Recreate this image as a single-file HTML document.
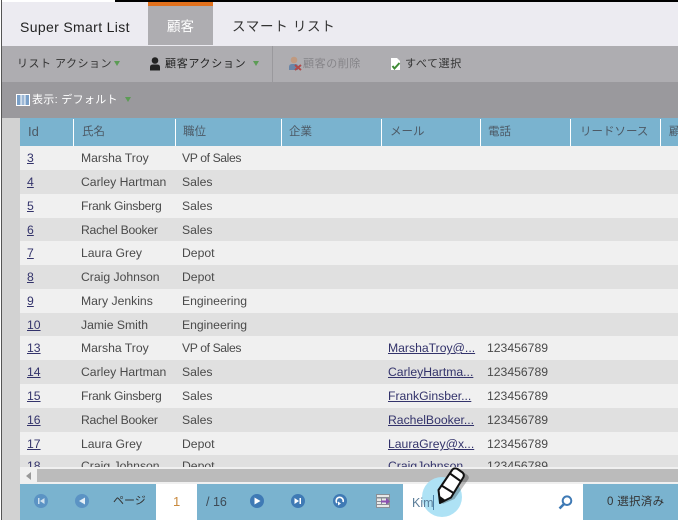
<!DOCTYPE html>
<html><head><meta charset="utf-8">
<style>
html,body{margin:0;padding:0;background:#fff}
#p{position:relative;width:678px;height:520px;overflow:hidden;font-family:"Liberation Sans","Noto Sans CJK JP",sans-serif;font-size:12px;color:#444;background:#fff}
#p div,#p span.a,#p svg.a{position:absolute}
.t{white-space:nowrap;line-height:16px;height:16px}
.c{white-space:nowrap;line-height:16px;height:16px;font-size:12.2px;color:#4a4a4a}
.n{letter-spacing:-.25px}
.v{letter-spacing:-.4px}
.l{color:#33336b;text-decoration:underline}
.h{top:124px;white-space:nowrap;line-height:16px;font-size:11.5px;color:#4d5a66}
.s{width:1px;top:119px;height:27px;background:#fff}
</style></head><body>
<div id="p">
<div style="left:0;top:0;width:678px;height:520px;background:#fff"></div>
<div style="left:2px;top:2px;width:676px;height:44px;background:#ecebf1"></div>
<div style="left:115px;top:0;width:563px;height:2px;background:#000"></div>
<div style="left:1px;top:0;width:1px;height:520px;background:#555"></div>
<div style="left:148px;top:2px;width:65px;height:43px;background:#aeadb1"></div>
<div style="left:148px;top:2px;width:65px;height:4px;background:#e2711d"></div>
<div class="t" style="left:20px;top:19px;font-size:14px;letter-spacing:.35px;color:#222">Super Smart List</div>
<div class="t" style="left:167px;top:19px;font-size:13.5px;color:#fff">顧客</div>
<div class="t" style="left:232px;top:19px;font-size:13.5px;letter-spacing:.7px;color:#333">スマート リスト</div>

<div style="left:2px;top:46px;width:676px;height:36px;background:#aeadb1"></div>
<div style="left:272px;top:46px;width:1px;height:36px;background:#9a999d"></div>
<div class="t" style="left:17px;top:56px;font-size:11px;letter-spacing:.5px;color:#333">リスト アクション</div>
<svg class="a" style="left:114px;top:61px" width="6" height="5"><path d="M0 0H6L3 5Z" fill="#5c9c55"/></svg>
<svg class="a" style="left:149px;top:57px" width="12" height="14"><circle cx="6" cy="3.500" r="3.300" fill="#222"/><path d="M1 13.500V10Q1 7.500 4 7.500H8Q11 7.500 11 10V13.500Z" fill="#222"/></svg>
<div class="t" style="left:165px;top:56px;font-size:11px;letter-spacing:.7px;color:#222">顧客アクション</div>
<svg class="a" style="left:253px;top:61px" width="6" height="5"><path d="M0 0H6L3 5Z" fill="#5c9c55"/></svg>
<svg class="a" style="left:288px;top:56px" width="14" height="15"><circle cx="6" cy="4" r="3.300" fill="#c09a80"/><path d="M1 14V11Q1 8 4 8H8Q10 8 10 11V14Z" fill="#6a86a8"/><path d="M7 9L13 14M13 9L7 14" stroke="#b04a4a" stroke-width="2"/></svg>
<div class="t" style="left:303px;top:56px;font-size:11px;letter-spacing:.6px;color:#858488">顧客の削除</div>
<svg class="a" style="left:390px;top:57px" width="11" height="14"><path d="M1 1H7L10 4V13H1Z" fill="#fff"/><path d="M2.500 9L4.500 11.500L9.500 6" fill="none" stroke="#3f8a35" stroke-width="2"/></svg>
<div class="t" style="left:405px;top:56px;font-size:11px;letter-spacing:.6px;color:#333">すべて選択</div>

<div style="left:2px;top:82px;width:676px;height:36px;background:#9a999d"></div>
<svg class="a" style="left:16px;top:94px" width="14" height="12"><rect width="14" height="12" fill="#fff"/><rect x="1" y="1" width="3.500" height="10" fill="#7aa0c8"/><rect x="5.500" y="1" width="3" height="10" fill="#9db8d6"/><rect x="9.500" y="1" width="3.500" height="10" fill="#7aa0c8"/></svg>
<div class="t" style="left:32px;top:92px;font-size:11px;letter-spacing:.3px;color:#fff">表示: デフォルト</div>
<svg class="a" style="left:125px;top:97px" width="6" height="5"><path d="M0 0H6L3 5Z" fill="#5c9c55"/></svg>

<div style="left:2px;top:118px;width:18px;height:350px;background:#d2d2d2"></div>
<div style="left:2px;top:468px;width:18px;height:52px;background:#d2d2d2"></div>
<div style="left:20px;top:118px;width:658px;height:28px;background:#7ab3cf"></div>
<div class="s" style="left:73px"></div><div class="s" style="left:175px"></div><div class="s" style="left:281px"></div><div class="s" style="left:381px"></div><div class="s" style="left:480px"></div><div class="s" style="left:570px"></div><div class="s" style="left:660px"></div>
<div class="h" style="left:28px;font-size:13px">Id</div>
<div class="h" style="left:82px">氏名</div>
<div class="h" style="left:183px">職位</div>
<div class="h" style="left:289px">企業</div>
<div class="h" style="left:390px">メール</div>
<div class="h" style="left:488px">電話</div>
<div class="h" style="left:580px">リードソース</div>
<div class="h" style="left:669px">顧客</div>

<div style="left:20px;top:146px;width:658px;height:24px;background:#f0f0f0"></div>
<div style="left:20px;top:170px;width:658px;height:24px;background:#e0e0e0"></div>
<div style="left:20px;top:194px;width:658px;height:24px;background:#f0f0f0"></div>
<div style="left:20px;top:218px;width:658px;height:23px;background:#e0e0e0"></div>
<div style="left:20px;top:241px;width:658px;height:24px;background:#f0f0f0"></div>
<div style="left:20px;top:265px;width:658px;height:24px;background:#e0e0e0"></div>
<div style="left:20px;top:289px;width:658px;height:24px;background:#f0f0f0"></div>
<div style="left:20px;top:313px;width:658px;height:23px;background:#e0e0e0"></div>
<div style="left:20px;top:336px;width:658px;height:24px;background:#f0f0f0"></div>
<div style="left:20px;top:360px;width:658px;height:24px;background:#e0e0e0"></div>
<div style="left:20px;top:384px;width:658px;height:24px;background:#f0f0f0"></div>
<div style="left:20px;top:408px;width:658px;height:24px;background:#e0e0e0"></div>
<div style="left:20px;top:432px;width:658px;height:23px;background:#f0f0f0"></div>
<div style="left:20px;top:455px;width:658px;height:13px;background:#e0e0e0"></div>

<div class="c l" style="left:27px;top:150px">3</div><div class="c" style="left:81px;top:150px">Marsha Troy</div><div class="c v" style="left:182px;top:150px">VP of Sales</div>
<div class="c l" style="left:27px;top:174px">4</div><div class="c" style="left:81px;top:174px">Carley Hartman</div><div class="c" style="left:182px;top:174px">Sales</div>
<div class="c l" style="left:27px;top:198px">5</div><div class="c n" style="left:81px;top:198px">Frank Ginsberg</div><div class="c" style="left:182px;top:198px">Sales</div>
<div class="c l" style="left:27px;top:222px">6</div><div class="c n" style="left:81px;top:222px">Rachel Booker</div><div class="c" style="left:182px;top:222px">Sales</div>
<div class="c l" style="left:27px;top:245px">7</div><div class="c" style="left:81px;top:245px">Laura Grey</div><div class="c" style="left:182px;top:245px">Depot</div>
<div class="c l" style="left:27px;top:269px">8</div><div class="c" style="left:81px;top:269px">Craig Johnson</div><div class="c" style="left:182px;top:269px">Depot</div>
<div class="c l" style="left:27px;top:293px">9</div><div class="c" style="left:81px;top:293px">Mary Jenkins</div><div class="c" style="left:182px;top:293px">Engineering</div>
<div class="c l" style="left:27px;top:317px">10</div><div class="c" style="left:81px;top:317px">Jamie Smith</div><div class="c" style="left:182px;top:317px">Engineering</div>
<div class="c l" style="left:27px;top:340px">13</div><div class="c" style="left:81px;top:340px">Marsha Troy</div><div class="c v" style="left:182px;top:340px">VP of Sales</div><div class="c l" style="left:388px;top:340px">MarshaTroy@...</div><div class="c" style="left:487px;top:340px">123456789</div>
<div class="c l" style="left:27px;top:364px">14</div><div class="c" style="left:81px;top:364px">Carley Hartman</div><div class="c" style="left:182px;top:364px">Sales</div><div class="c l" style="left:388px;top:364px">CarleyHartma...</div><div class="c" style="left:487px;top:364px">123456789</div>
<div class="c l" style="left:27px;top:388px">15</div><div class="c n" style="left:81px;top:388px">Frank Ginsberg</div><div class="c" style="left:182px;top:388px">Sales</div><div class="c l" style="left:388px;top:388px">FrankGinsber...</div><div class="c" style="left:487px;top:388px">123456789</div>
<div class="c l" style="left:27px;top:412px">16</div><div class="c n" style="left:81px;top:412px">Rachel Booker</div><div class="c" style="left:182px;top:412px">Sales</div><div class="c l" style="left:388px;top:412px">RachelBooker...</div><div class="c" style="left:487px;top:412px">123456789</div>
<div class="c l" style="left:27px;top:436px">17</div><div class="c" style="left:81px;top:436px">Laura Grey</div><div class="c" style="left:182px;top:436px">Depot</div><div class="c l" style="left:388px;top:436px">LauraGrey@x...</div><div class="c" style="left:487px;top:436px">123456789</div>
<div class="c l" style="left:27px;top:458px">18</div><div class="c" style="left:81px;top:458px">Craig Johnson</div><div class="c" style="left:182px;top:458px">Depot</div><div class="c l" style="left:388px;top:458px">CraigJohnson...</div><div class="c" style="left:487px;top:458px">123456789</div>

<div style="left:20px;top:467px;width:658px;height:17px;background:#f0f0f0"></div>
<div style="left:37px;top:469px;width:641px;height:13px;background:#bbb"></div>
<svg class="a" style="left:25px;top:472px" width="7" height="8"><path d="M6 0V8L1 4Z" fill="#999"/></svg>

<div style="left:20px;top:484px;width:658px;height:36px;background:#7ab3cf"></div>
<div style="left:156px;top:484px;width:41px;height:36px;background:#fff"></div>
<div style="left:403px;top:484px;width:180px;height:36px;background:#fff"></div>

<svg class="a" style="left:34px;top:494px" width="14" height="14"><circle cx="7" cy="7" r="7" fill="#5b93c4"/><path d="M4 4H5.500V10H4ZM10.500 4V10L6 7Z" fill="#cfe0ee"/></svg>
<svg class="a" style="left:75px;top:494px" width="14" height="14"><circle cx="7" cy="7" r="7" fill="#5b93c4"/><path d="M10 3.500V10.500L4 7Z" fill="#e4eef6"/></svg>
<div class="t" style="left:113px;top:493px;font-size:11px;color:#333">ページ</div>
<div class="t" style="left:173px;top:494px;font-size:13px;color:#c98a3e">1</div>
<div class="t" style="left:206px;top:494px;font-size:12.5px;color:#3d4a55">/ 16</div>
<svg class="a" style="left:250px;top:494px" width="14" height="14"><circle cx="7" cy="7" r="7" fill="#3f7ab5"/><path d="M4.500 3.500V10.500L10.500 7Z" fill="#fff"/></svg>
<svg class="a" style="left:291px;top:494px" width="14" height="14"><circle cx="7" cy="7" r="7" fill="#3f7ab5"/><path d="M3.500 4V10L8 7ZM8.500 4H10V10H8.500Z" fill="#fff"/></svg>
<svg class="a" style="left:333px;top:494px" width="14" height="14"><circle cx="7" cy="7" r="7" fill="#3f7ab5"/><path d="M4 9A3.500 3.500 0 1 1 10 8" fill="none" stroke="#fff" stroke-width="1.600"/><path d="M5 7.500V11.500L8 9.500Z" fill="#fff"/></svg>
<svg class="a" style="left:376px;top:494px" width="14" height="14"><rect width="14" height="14" fill="#8a8f96"/><path d="M1 1H13V3H1ZM1 4.500H5V7H1ZM6 4.500H10V7H6ZM1 8H5V10H1ZM6 8H10V10H6ZM1 11H13V13H1Z" fill="#e8e8e8"/><path d="M5 6.500H10V4L14 7.500L10 10.500V8.500H5Z" fill="#8b4fb0"/></svg>

<div style="left:422px;top:477px;width:40px;height:40px;border-radius:50%;background:#aee2f5"></div>
<div class="t" style="left:412px;top:495px;font-size:12.5px;color:#5b7d99">Kim</div>
<div style="left:433px;top:495px;width:1px;height:15px;background:#4a80a8"></div>
<svg class="a" style="left:558px;top:495px" width="15" height="15"><circle cx="9" cy="5.700" r="4.300" fill="none" stroke="#3f7ab5" stroke-width="2"/><path d="M6 9L1.500 13.500" stroke="#3f7ab5" stroke-width="2.600"/></svg>
<svg class="a" style="left:435px;top:465px" width="36" height="42"><path d="M20 6Q22 4 25 6L31 10Q33 12 32 14L18 34L6 39L5 27Z" fill="#000" opacity=".25" transform="translate(1.500 0)"/><path d="M17.500 4.500Q19.500 2.500 22.500 4L27.500 7.500Q29.500 9.500 28.500 12L16 32.500L5 38L3.500 25Z" fill="#fff" stroke="#111" stroke-width="2" stroke-linejoin="round"/><path d="M15 8.500L25.500 16" stroke="#111" stroke-width="2"/><path d="M6.500 20.500L18.500 28" stroke="#111" stroke-width="2"/><path d="M5 38L4.200 30.500L10.500 35Z" fill="#111"/></svg>
<div class="t" style="left:607px;top:494px;font-size:11.5px;letter-spacing:.3px;color:#333">0 選択済み</div>
</div>
</body></html>
